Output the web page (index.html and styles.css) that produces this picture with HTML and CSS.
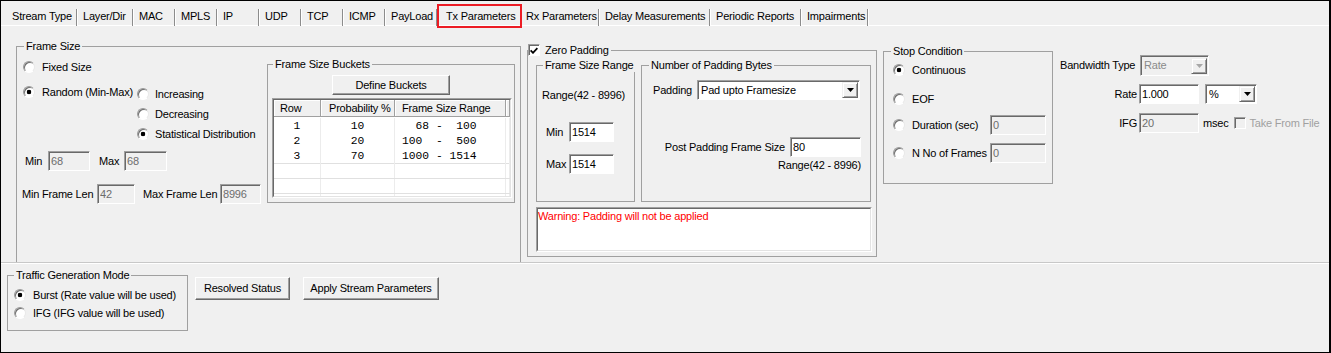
FILE: index.html
```html
<!DOCTYPE html>
<html lang="en">
<head>
  <meta charset="UTF-8">
  <title>Tx Parameters</title>
  <link rel="stylesheet" href="styles.css">
</head>
<body>
<div class="window">

  <div class="tabs">
    <div class="tab"><span>Stream Type</span></div>
    <div class="tab"><span>Layer/Dir</span></div>
    <div class="tab"><span>MAC</span></div>
    <div class="tab"><span>MPLS</span></div>
    <div class="tab"><span>IP</span></div>
    <div class="tab"><span>UDP</span></div>
    <div class="tab"><span>TCP</span></div>
    <div class="tab"><span>ICMP</span></div>
    <div class="tab"><span>PayLoad</span></div>
    <div class="tab active"><span>Tx Parameters</span></div>
    <div class="tab"><span>Rx Parameters</span></div>
    <div class="tab"><span>Delay Measurements</span></div>
    <div class="tab"><span>Periodic Reports</span></div>
    <div class="tab"><span>Impairments</span></div>
  </div>

  <div class="page">

    <fieldset class="group frame-size">
      <legend>Frame Size</legend>
      <div class="fs-body">
        <div class="fs-left">
          <label class="opt fixed"><input type="radio" class="rb" name="fs">Fixed Size</label>
          <div class="mode">
            <label class="opt random"><input type="radio" class="rb" name="fs" checked>Random (Min-Max)</label>
            <div class="sub-opts">
              <label class="opt"><input type="radio" class="rb" name="dist">Increasing</label>
              <label class="opt"><input type="radio" class="rb" name="dist">Decreasing</label>
              <label class="opt"><input type="radio" class="rb" name="dist" checked>Statistical Distribution</label>
            </div>
          </div>
          <div class="field-row minmax">
            <span class="lbl-min">Min</span><input class="txt w-min" value="68" disabled>
            <span class="lbl-max">Max</span><input class="txt w-max" value="68" disabled>
          </div>
          <div class="field-row lens">
            <span class="lbl-minlen">Min Frame Len</span><input class="txt w-minlen" value="42" disabled>
            <span class="lbl-maxlen">Max Frame Len</span><input class="txt w-maxlen" value="8996" disabled>
          </div>
        </div>

        <fieldset class="group buckets">
          <legend>Frame Size Buckets</legend>
          <button class="btn define">Define Buckets</button>
          <div class="grid">
            <div class="grid-in">
              <div class="g-row g-head">
                <span class="c-row">Row</span>
                <span class="c-prob">Probability %</span>
                <span class="c-range">Frame Size Range</span>
                <span></span>
              </div>
              <div class="g-body">
                <div class="g-row"><span class="c-row">1</span><span class="c-prob">10</span><span class="c-range">  68 -  100</span><span></span></div>
                <div class="g-row"><span class="c-row">2</span><span class="c-prob">20</span><span class="c-range">100  -  500</span><span></span></div>
                <div class="g-row"><span class="c-row">3</span><span class="c-prob">70</span><span class="c-range">1000 - 1514</span><span></span></div>
                <div class="g-row empty"><span></span><span></span><span></span><span></span></div>
                <div class="g-row empty"><span></span><span></span><span></span><span></span></div>
                <div class="g-row empty"><span></span><span></span><span></span><span></span></div>
              </div>
            </div>
          </div>
        </fieldset>
      </div>
    </fieldset>

    <fieldset class="group zero-pad">
      <legend>
        <span class="chk"><svg width="8" height="7" viewBox="0 0 8 7"><path d="M0.6 3.4 L3 5.8 L7.4 1.2" fill="none" stroke="#000" stroke-width="1.8"/></svg></span>
        Zero Padding
      </legend>
      <div class="zp-top">
        <fieldset class="group fs-range">
          <legend>Frame Size Range</legend>
          <div class="range-note">Range(42 - 8996)</div>
          <div class="field-row fr-row first"><span class="lbl-fr">Min</span><input class="txt w-fr" value="1514"></div>
          <div class="field-row fr-row"><span class="lbl-fr">Max</span><input class="txt w-fr" value="1514"></div>
        </fieldset>
        <fieldset class="group pad-bytes">
          <legend>Number of Padding Bytes</legend>
          <div class="field-row pad-row">
            <span class="lbl-pad">Padding</span>
            <div class="combo w-pad"><span class="val">Pad upto Framesize</span><span class="drop"><svg width="7" height="4" viewBox="0 0 7 4"><path d="M0 0h7L3.5 4z"/></svg></span></div>
          </div>
          <div class="field-row post-row">
            <span class="lbl-post">Post Padding Frame Size</span><input class="txt w-post" value="80">
          </div>
          <div class="range-right">Range(42 - 8996)</div>
        </fieldset>
      </div>
      <div class="warning"><div class="warning-in">Warning: Padding will not be applied</div></div>
    </fieldset>

    <fieldset class="group stop">
      <legend>Stop Condition</legend>
      <label class="opt continuous"><input type="radio" class="rb" name="stop" checked>Continuous</label>
      <label class="opt eof"><input type="radio" class="rb" name="stop">EOF</label>
      <div class="opt-row duration">
        <label class="opt"><input type="radio" class="rb" name="stop">Duration (sec)</label>
        <input class="txt w-stop" value="0" disabled>
      </div>
      <div class="opt-row frames">
        <label class="opt"><input type="radio" class="rb" name="stop">N No of Frames</label>
        <input class="txt w-stop" value="0" disabled>
      </div>
    </fieldset>

    <div class="bandwidth">
      <div class="bw-row type-row">
        <span class="lbl-bwtype">Bandwidth Type</span>
        <div class="combo dis w-bwtype"><span class="val">Rate</span><span class="drop"><svg width="7" height="4" viewBox="0 0 7 4"><path d="M0 0h7L3.5 4z"/></svg></span></div>
      </div>
      <div class="bw-row rate-row">
        <span class="lbl-bw">Rate</span>
        <input class="txt w-bw" value="1.000">
        <div class="combo w-unit"><span class="val">%</span><span class="drop"><svg width="7" height="4" viewBox="0 0 7 4"><path d="M0 0h7L3.5 4z"/></svg></span></div>
      </div>
      <div class="bw-row ifg-row">
        <span class="lbl-bw">IFG</span>
        <input class="txt w-bw" value="20" disabled>
        <span class="msec">msec</span>
        <span class="chk dis"></span>
        <span class="muted">Take From File</span>
      </div>
    </div>

  </div>

  <div class="footer">
    <fieldset class="group traffic">
      <legend>Traffic Generation Mode</legend>
      <label class="opt first"><input type="radio" class="rb" name="mode" checked>Burst (Rate value will be used)</label>
      <label class="opt"><input type="radio" class="rb" name="mode">IFG (IFG value will be used)</label>
    </fieldset>
    <button class="btn resolved">Resolved Status</button>
    <button class="btn apply">Apply Stream Parameters</button>
  </div>

</div>
</body>
</html>
```

FILE: styles.css
```css
* {
  box-sizing: border-box;
}

body {
  margin: 0;
  font-family: "Liberation Sans", Arial, sans-serif;
  font-size: 11px;
  letter-spacing: -0.2px;
  line-height: 13px;
  color: #000;
  background: #fff;
}

.window {
  width: 1331px;
  height: 353px;
  border: 1px solid #000;
  border-right-width: 2px;
  background: #f0f0f0;
  overflow: hidden;
}

/* tab strip */
.tabs {
  display: flex;
  height: 25px;
  padding-left: 5px;
  border-bottom: 1px solid #fff;
}

.tab {
  flex: none;
}

.tab span {
  display: block;
  margin-top: 8px;
  height: 17px;
  line-height: 15px;
  padding-left: 6px;
  border-right: 1px solid #8c8c8c;
  box-shadow: 1px 0 0 #fff;
  white-space: nowrap;
}

.tab:nth-child(1) { width: 71px; }
.tab:nth-child(2) { width: 56px; }
.tab:nth-child(3),
.tab:nth-child(4),
.tab:nth-child(5),
.tab:nth-child(6),
.tab:nth-child(7),
.tab:nth-child(8) { width: 42px; }
.tab:nth-child(9) { width: 52px; }
.tab:nth-child(10) { width: 85px; }
.tab:nth-child(11) { width: 77px; }
.tab:nth-child(11) span { padding-left: 4px; }
.tab:nth-child(12) { width: 111px; }
.tab:nth-child(13) { width: 91px; }
.tab:nth-child(14) { width: 67px; }

.tab.active span {
  margin-top: 3px;
  height: 24px;
  line-height: 20px;
  padding-left: 7px;
  border: 2px solid #ec1c24;
  box-shadow: none;
}

/* main tab page */
.page {
  display: flex;
  align-items: flex-start;
  height: 237px;
  padding-left: 15px;
  border-bottom: 1px solid #c8c8c8;
  overflow: hidden;
}

.group {
  margin: 0;
  padding: 0;
  min-width: 0;
  flex: none;
  border: 1px solid #a0a0a0;
}

.group > legend {
  height: 13px;
  line-height: 13px;
  padding: 0 2px;
  margin-left: 7px;
  white-space: nowrap;
}

.opt {
  display: flex;
  align-items: center;
  gap: 7px;
  height: 20px;
  white-space: nowrap;
}

.field-row {
  display: flex;
  align-items: center;
  height: 20px;
  white-space: nowrap;
}

/* controls */
.rb {
  -webkit-appearance: none;
  appearance: none;
  flex: none;
  margin: 0;
  width: 12px;
  height: 12px;
  border-radius: 50%;
  background: #fff;
  border: 1px solid;
  border-color: #9a9a9a #e8e8e8 #fff #9a9a9a;
  box-shadow: inset 1px 1px 0 #6e6e6e;
}

.rb:checked {
  background: radial-gradient(circle at 50% 50%, #000 0 2px, #fff 2.6px);
}

.txt {
  flex: none;
  height: 20px;
  margin: 0;
  padding: 0 2px;
  font: inherit;
  letter-spacing: inherit;
  color: #000;
  background: #fff;
  border: 1px solid;
  border-color: #a0a0a0 #fff #fff #a0a0a0;
  box-shadow: inset 1px 1px 0 #696969;
  outline: none;
}

.txt:disabled {
  background: #f0f0f0;
  color: #6d6d6d;
}

.chk {
  flex: none;
  display: flex;
  align-items: center;
  justify-content: center;
  width: 12px;
  height: 12px;
  background: #fff;
  border: 1px solid;
  border-color: #a0a0a0 #fff #fff #a0a0a0;
  box-shadow: inset 1px 1px 0 #696969;
}

.chk.dis {
  background: #f0f0f0;
}

.combo {
  flex: none;
  display: flex;
  align-items: center;
  height: 20px;
  background: #fff;
  border: 1px solid;
  border-color: #a0a0a0 #fff #fff #a0a0a0;
  box-shadow: inset 1px 1px 0 #696969;
}

.combo .val {
  flex: 1;
  padding-left: 3px;
  white-space: nowrap;
  overflow: hidden;
}

.combo .drop {
  flex: none;
  align-self: flex-end;
  display: flex;
  align-items: center;
  justify-content: center;
  width: 16px;
  height: 16px;
  margin: 0 1px 1px 0;
  background: #f0f0f0;
  border: 1px solid;
  border-color: #f0f0f0 #696969 #696969 #f0f0f0;
  box-shadow: inset 1px 1px 0 #fff, inset -1px -1px 0 #a0a0a0;
}

.combo.dis {
  background: #f0f0f0;
  color: #8a8a8a;
}

.combo.dis .drop svg {
  fill: #a8a8a8;
}

.btn {
  flex: none;
  height: 23px;
  padding: 0;
  font: inherit;
  letter-spacing: inherit;
  color: #000;
  background: #f0f0f0;
  border: 1px solid;
  border-color: #fff #696969 #696969 #fff;
  box-shadow: inset -1px -1px 0 #a0a0a0;
}

/* frame size */
.frame-size {
  width: 505px;
  height: 260px;
  margin-top: 14px;
}

.fs-body {
  display: flex;
}

.fs-left {
  flex: none;
  width: 250px;
}

.fs-left .fixed {
  margin-top: 4px;
  padding-left: 6px;
}

.mode {
  display: flex;
  margin-top: 5px;
}

.mode .random {
  width: 120px;
  padding-left: 6px;
}

.sub-opts {
  margin-top: 2px;
}

.sub-opts .opt {
  gap: 6px;
}

.minmax {
  margin-top: 7px;
  padding-left: 8px;
}

.lbl-min { width: 23px; }
.w-min { width: 42px; }
.lbl-max { width: 25px; margin-left: 9px; }
.w-max { width: 43px; }

.lens {
  margin-top: 13px;
  padding-left: 5px;
}

.lbl-minlen { width: 75px; }
.w-minlen { width: 38px; }
.lbl-maxlen { width: 77px; margin-left: 8px; }
.w-maxlen { width: 41px; }

.buckets {
  width: 248px;
  height: 145px;
  margin-top: 5px;
}

.buckets > legend {
  margin-left: 5px;
}

.btn.define {
  display: block;
  width: 118px;
  height: 20px;
  margin: 4px auto 0;
}

.grid {
  width: 240px;
  height: 100px;
  margin: 3px 0 0 4px;
  border: 1px solid;
  border-color: #a0a0a0 #fff #fff #a0a0a0;
  overflow: hidden;
}

.grid-in {
  height: 100%;
  background: #fff;
  border: 1px solid;
  border-color: #696969 #e3e3e3 #e3e3e3 #696969;
  overflow: hidden;
}

.g-row {
  display: grid;
  grid-template-columns: 47px 74px 111px 1fr;
  height: 15px;
}

.g-head {
  height: 17px;
}

.g-head span {
  line-height: 16px;
  background: #f0f0f0;
  border-right: 1px solid #a0a0a0;
  border-bottom: 1px solid #a0a0a0;
  box-shadow: inset 1px 1px 0 #fff;
  white-space: nowrap;
  overflow: hidden;
}

.g-head .c-row { padding-left: 6px; }
.g-head .c-prob { padding-left: 8px; }
.g-head .c-range { padding-left: 7px; }

.g-body {
  padding-top: 1px;
}

.g-body span {
  font-family: "Liberation Mono", "Courier New", monospace;
  font-size: 11.3px;
  letter-spacing: 0;
  line-height: 17px;
  white-space: pre;
  border-right: 1px solid #ececec;
}

.g-body .c-row,
.g-body .c-prob {
  text-align: center;
}

.g-body .c-range {
  padding-left: 7px;
}

.g-row.empty {
  border-top: 1px solid #e0e0e0;
}

/* zero padding */
.zero-pad {
  width: 350px;
  height: 213px;
  margin: 18px 0 0 6px;
}

.zero-pad > legend {
  display: flex;
  align-items: center;
  gap: 5px;
  height: 12px;
  margin-left: 0;
  padding: 0 2px 0 0;
}

.zp-top {
  display: flex;
  gap: 6px;
  margin-top: 3px;
  padding-left: 8px;
}

.fs-range {
  width: 99px;
  height: 143px;
}

.fs-range > legend {
  margin-left: 6px;
}

.range-note {
  margin-top: 17px;
  padding-left: 5px;
  white-space: nowrap;
}

.fr-row {
  margin-top: 12px;
  padding-left: 9px;
}

.fr-row.first {
  margin-top: 20px;
}

.lbl-fr { width: 23px; }
.w-fr { width: 45px; }

.pad-bytes {
  width: 230px;
  height: 143px;
}

.pad-row {
  margin-top: 8px;
  padding-left: 11px;
}

.lbl-pad { width: 44px; }
.w-pad { width: 163px; }

.post-row {
  justify-content: flex-end;
  margin-top: 37px;
  padding-right: 9px;
}

.lbl-post { margin-right: 5px; }
.w-post { width: 71px; }

.range-right {
  margin-top: 2px;
  padding-right: 9px;
  text-align: right;
}

.warning {
  width: 336px;
  height: 45px;
  margin: 5px 0 0 8px;
  border: 1px solid;
  border-color: #a0a0a0 #fff #fff #a0a0a0;
}

.warning-in {
  height: 100%;
  padding: 1px 0 0 0;
  color: #ff0000;
  background: #fff;
  border: 1px solid;
  border-color: #696969 #e3e3e3 #e3e3e3 #696969;
}

/* stop condition */
.stop {
  width: 170px;
  height: 139px;
  margin: 19px 0 0 6px;
}

.stop .opt {
  padding-left: 9px;
}

.stop .continuous { margin-top: 2px; }
.stop .eof { margin-top: 9px; }

.opt-row {
  display: flex;
  align-items: center;
  justify-content: space-between;
  height: 20px;
  padding-right: 6px;
}

.opt-row.duration { margin-top: 6px; }
.opt-row.frames { margin-top: 8px; }

.w-stop { width: 56px; }

/* bandwidth */
.bandwidth {
  flex: none;
  margin: 29px 0 0 7px;
}

.bw-row {
  display: flex;
  align-items: center;
  white-space: nowrap;
}

.type-row { height: 21px; }
.lbl-bwtype { width: 80px; }
.w-bwtype { width: 69px; height: 21px; }

.rate-row {
  height: 20px;
  margin-top: 8px;
}

.ifg-row {
  height: 20px;
  margin-top: 9px;
}

.lbl-bw {
  width: 79px;
  padding-right: 2px;
  text-align: right;
}

.w-bw { width: 60px; }
.w-unit { width: 52px; margin-left: 6px; }

.msec { margin-left: 4px; }
.ifg-row .chk { margin-left: 6px; }
.muted { margin-left: 3px; color: #a0a0a0; }

/* bottom strip */
.footer {
  display: flex;
  align-items: flex-start;
  height: 89px;
  padding-left: 6px;
  border-top: 1px solid #fff;
}

.traffic {
  width: 181px;
  height: 62px;
  margin-top: 5px;
}

.traffic > legend {
  margin-left: 6px;
}

.traffic .opt {
  height: 18px;
  padding-left: 6px;
}

.traffic .opt.first {
  margin-top: 4px;
}

.btn.resolved {
  width: 95px;
  margin: 13px 0 0 7px;
}

.btn.apply {
  width: 136px;
  margin: 13px 0 0 13px;
}
```
